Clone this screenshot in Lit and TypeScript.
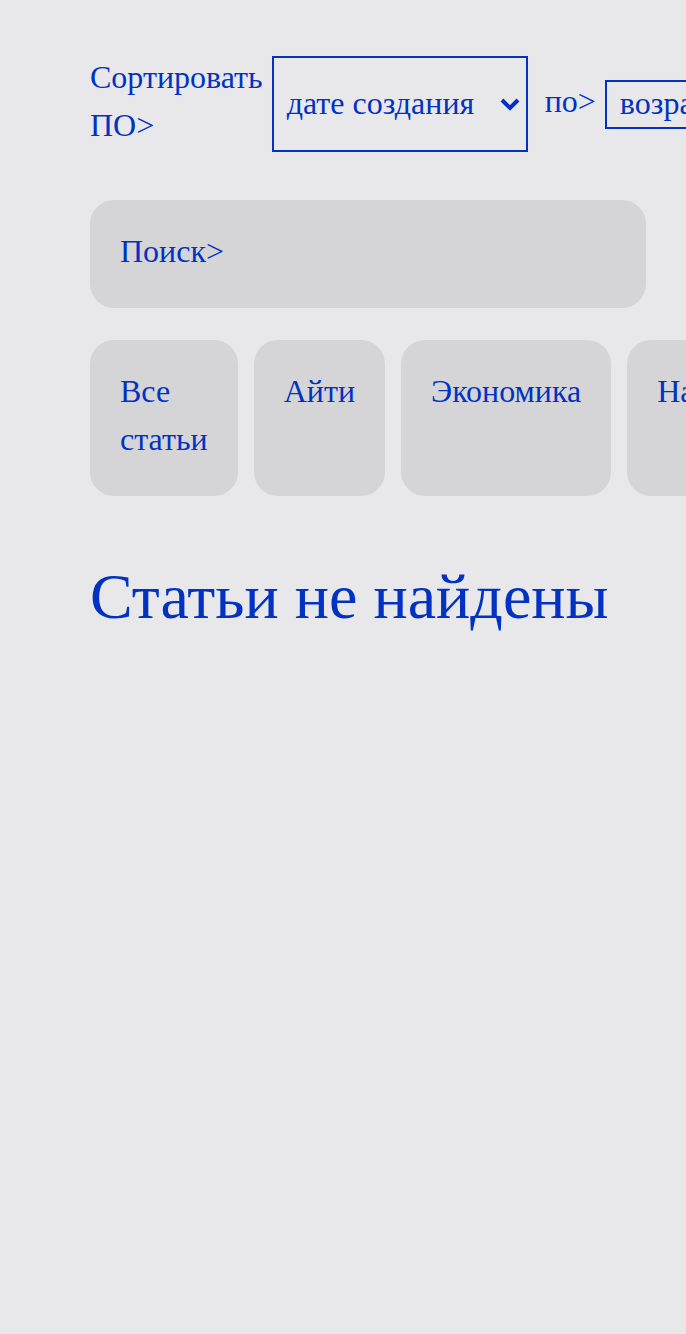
import { LitElement, html, css } from "lit";
import { customElement, state } from "lit/decorators.js";

const CATEGORIES = ["Все статьи", "Айти", "Экономика", "Наука"];

@customElement("app-root")
export class AppRoot extends LitElement {
  static styles = css`
    :host {
      --primary: #0232c2;
      --page: #e8e8ea;
      --card: #d5d5d7;
      display: block;
      box-sizing: border-box;
      min-height: 100vh;
      padding: 53px 40px 40px 90px;
      overflow: hidden;
      background: var(--page);
      color: var(--primary);
      font: 32px/48px "Liberation Serif", "Times New Roman", serif;
    }
    .sort {
      display: flex;
      align-items: center;
      gap: 17px;
      margin-bottom: 48px;
    }
    .field {
      display: flex;
      flex: none;
      align-items: stretch;
      gap: 9px;
    }
    .field label {
      width: min-content;
      padding-bottom: 3px;
    }
    .box {
      display: grid;
      margin-top: 3px;
      border: 2px solid var(--primary);
    }
    .box select {
      grid-area: 1 / 1;
      appearance: none;
      box-sizing: border-box;
      min-width: 252px;
      margin: 0;
      padding: 0 40px 2px 10px;
      border: 0;
      border-radius: 0;
      background: none;
      color: inherit;
      font: inherit;
      line-height: 43px;
      text-indent: 3px;
    }
    .box svg {
      grid-area: 1 / 1;
      place-self: center end;
      width: 20px;
      height: 14px;
      margin-right: 6px;
      pointer-events: none;
    }
    .card {
      box-sizing: border-box;
      padding: 27px 30px 33px;
      border: 0;
      border-radius: 24px;
      background: var(--card);
      color: inherit;
      font: inherit;
      text-align: left;
    }
    .search {
      display: flex;
      margin-bottom: 32px;
    }
    .search input {
      flex: 1;
      min-width: 0;
      padding: 0 0 0 8px;
      border: 0;
      outline: 0;
      background: none;
      color: inherit;
      font: inherit;
    }
    .tabs {
      display: flex;
      gap: 16px;
      margin-bottom: 61px;
    }
    .tab {
      display: flex;
      flex: none;
      align-items: flex-start;
      cursor: pointer;
    }
    .tab span {
      width: min-content;
    }
    h1 {
      margin: 0;
      font-size: 64px;
      line-height: 80px;
      font-weight: 400;
    }
  `;

  @state() private category = CATEGORIES[0];

  private select(id: string, label: string, options: string[]) {
    return html`<div class="field">
      <label for=${id}>${label}</label>
      <div class="box">
        <select id=${id}>
          ${options.map((o) => html`<option>${o}</option>`)}
        </select>
        <svg viewBox="0 0 20 14" fill="none" stroke="currentColor" stroke-width="4" aria-hidden="true">
          <path d="M2 3 L10 11 L18 3" />
        </svg>
      </div>
    </div>`;
  }

  render() {
    return html`
      <div class="sort">
        ${this.select("sort", "Сортировать ПО>", ["дате создания", "названию"])}
        ${this.select("order", "по>", ["возрастанию", "убыванию"])}
      </div>
      <div class="card search">
        <label for="search">Поиск&gt;</label>
        <input id="search" type="text" />
      </div>
      <div class="tabs">
        ${CATEGORIES.map(
          (c) => html`<button
            class="card tab"
            type="button"
            aria-pressed=${c === this.category}
            @click=${() => (this.category = c)}
          ><span>${c}</span></button>`
        )}
      </div>
      <h1>Статьи не найдены</h1>
    `;
  }
}
